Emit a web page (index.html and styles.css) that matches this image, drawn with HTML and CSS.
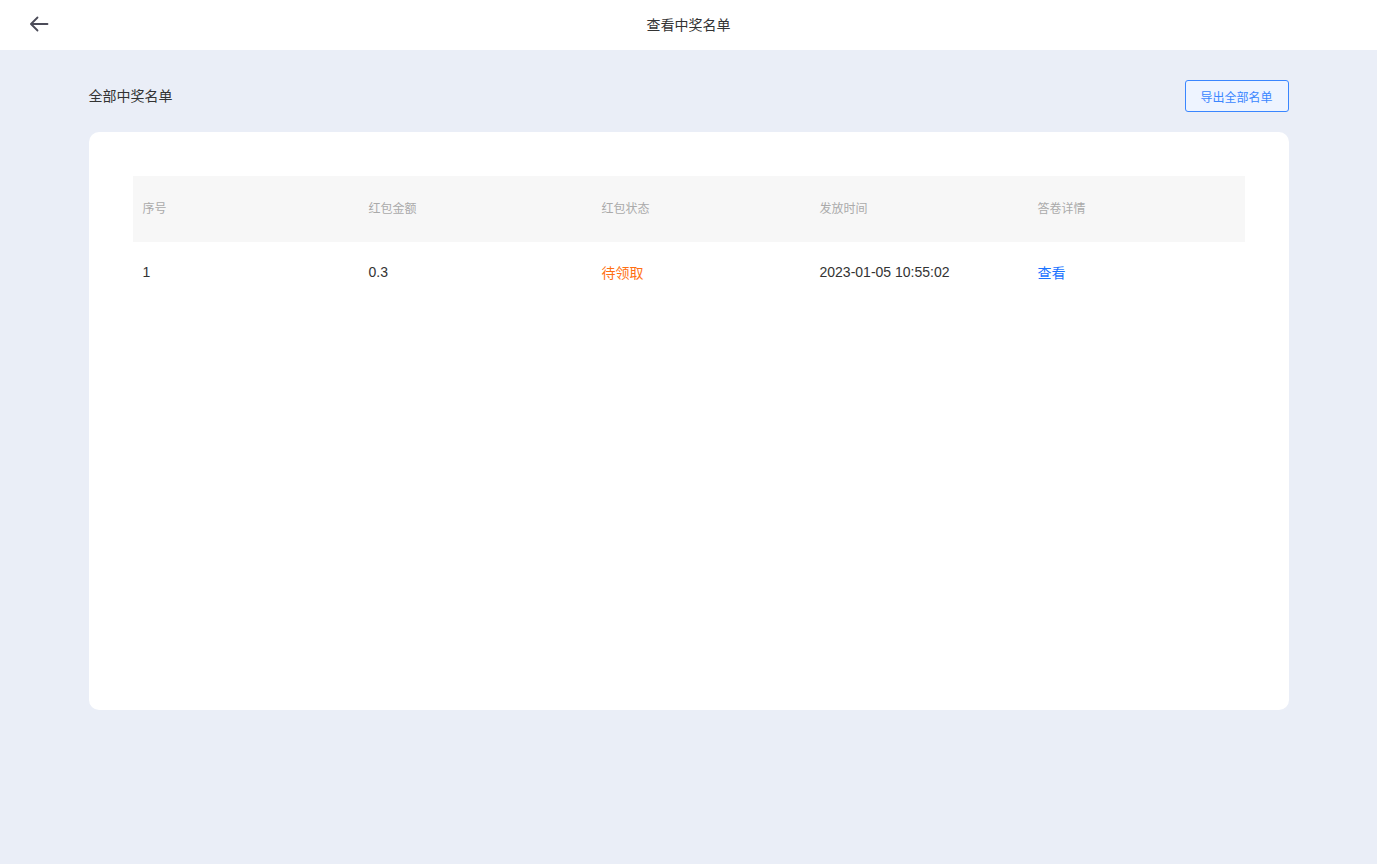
FILE: index.html
```html
<!DOCTYPE html>
<html lang="zh-CN">
<head>
<meta charset="utf-8">
<title>查看中奖名单</title>
<link rel="stylesheet" href="styles.css">
</head>
<body>
<header class="topbar">
  <button class="back" aria-label="返回">
    <svg width="20" height="16" viewBox="0 0 20 16" fill="none" stroke="#4b4b58" stroke-width="1.8" stroke-linecap="round" stroke-linejoin="round">
      <path d="M18.5 8H2.5"/>
      <path d="M8.5 1.5L2 8l6.5 6.5"/>
    </svg>
  </button>
  <h1 class="page-title">查看中奖名单</h1>
</header>
<main class="content">
  <div class="toolbar">
    <div class="section-title">全部中奖名单</div>
    <button class="export-btn">导出全部名单</button>
  </div>
  <section class="card">
    <div class="table">
      <div class="row head">
        <div class="cell">序号</div>
        <div class="cell">红包金额</div>
        <div class="cell">红包状态</div>
        <div class="cell">发放时间</div>
        <div class="cell">答卷详情</div>
      </div>
      <div class="row body">
        <div class="cell">1</div>
        <div class="cell">0.3</div>
        <div class="cell status">待领取</div>
        <div class="cell">2023-01-05 10:55:02</div>
        <div class="cell"><a class="link" href="#">查看</a></div>
      </div>
    </div>
  </section>
</main>
</body>
</html>
```
FILE: styles.css
```css
* { box-sizing: border-box; }
html, body { margin: 0; padding: 0; }
body {
  background: #eaeef7;
  font-family: "Liberation Sans", Arial, "Noto Sans CJK SC", sans-serif;
  color: #333;
  min-height: 864px;
}
.topbar {
  height: 50px;
  background: #fff;
  display: flex;
  align-items: center;
  justify-content: center;
  position: relative;
}
.back {
  position: absolute;
  left: 29px;
  top: 16px;
  border: 0;
  background: none;
  padding: 0;
  width: 20px;
  height: 16px;
  cursor: pointer;
  display: flex;
}
.page-title {
  margin: 0;
  font-size: 14px;
  font-weight: normal;
  color: #333;
  line-height: 50px;
}
.content {
  width: 1200px;
  margin: 0 auto;
  padding-top: 30px;
}
.toolbar {
  display: flex;
  justify-content: space-between;
  align-items: center;
  height: 32px;
  margin-bottom: 20px;
}
.section-title {
  font-size: 14px;
  color: #333;
  padding-bottom: 2px;
}
.export-btn {
  width: 104px;
  height: 32px;
  border: 1px solid #3a86ff;
  border-radius: 3px;
  background: #eef4ff;
  color: #3a86ff;
  font-size: 12px;
  font-family: inherit;
  padding: 0;
  cursor: pointer;
}
.card {
  background: #fff;
  border-radius: 10px;
  height: 578px;
  padding: 44px;
}
.row {
  display: grid;
  grid-template-columns: 226px 233px 218px 218px 217px;
  align-items: center;
}
.row.head {
  height: 66px;
  padding-bottom: 3px;
  background: #f7f7f7;
  font-size: 12px;
  color: #aaa;
}
.row.body {
  height: 60px;
  font-size: 14px;
  color: #333;
}
.cell { padding-left: 10px; }
.status { color: #ff7012; }
.link {
  color: #1a73ff;
  text-decoration: none;
}
```
